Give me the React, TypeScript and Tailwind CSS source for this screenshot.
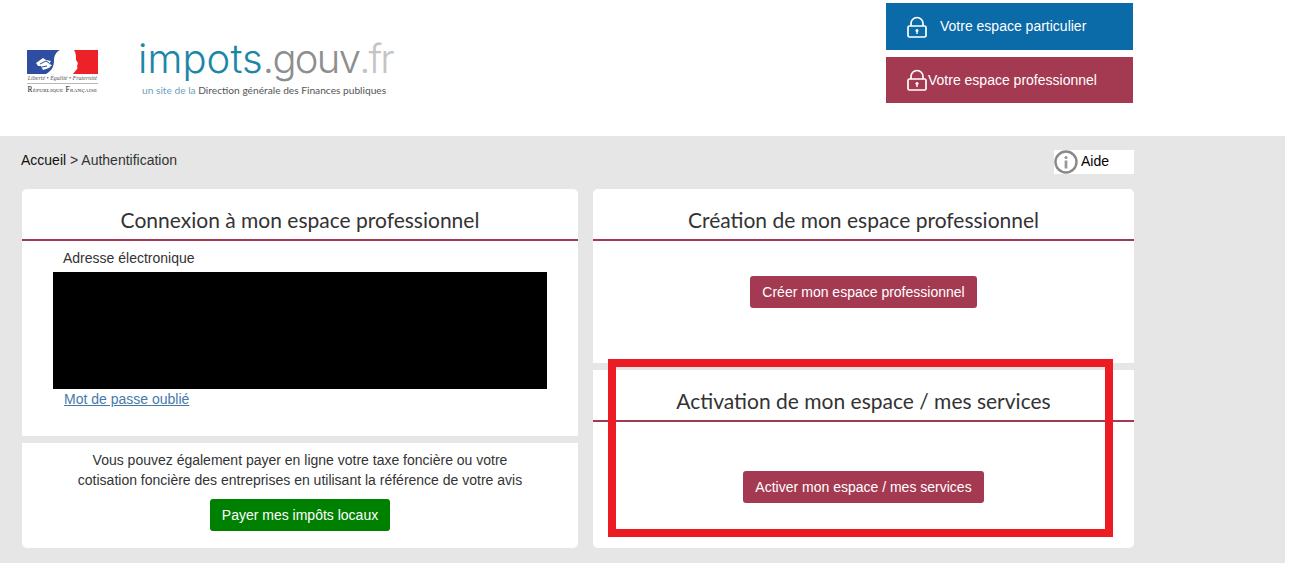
const sans = "font-['Liberation_Sans',Arial,sans-serif]";

function Marianne() {
  return (
    <svg width="71" height="24" viewBox="0 0 71 24" className="block">
      <rect x="0" y="0" width="71" height="24" fill="#fff" />
      <path d="M0 0h33c-4 2-6 6-6 10 0 5-1 10-8 14H0z" fill="#2f4ea1" />
      <path d="M47 0h24v24H46c1-2 3-3 4-5 1-1 0-2 0-3 1-1 0-2 1-3l-2-3c0-4 0-7-2-10z" fill="#ed2229" />
      <path d="M9 13l7-5 3 2 5 1-2 3 3 1-3 3-6 2-2-4-3 0z" fill="#fff" />
      <path d="M13 14l6-3 3 2M15 17l5-1" stroke="#2f4ea1" strokeWidth="1" fill="none" />
    </svg>
  );
}

function LockIcon() {
  return (
    <svg width="20" height="22" viewBox="0 0 20 22" fill="none" className="shrink-0">
      <path d="M4 10V7.5a6 6 0 0 1 12 0V10" stroke="#fff" strokeWidth="1.7" />
      <rect x="1" y="10" width="18" height="11" rx="1.5" stroke="#fff" strokeWidth="1.7" />
      <circle cx="10" cy="14.5" r="1.5" fill="#fff" />
      <rect x="9.3" y="15" width="1.4" height="3" fill="#fff" />
    </svg>
  );
}

function Heading({ children }: { children: React.ReactNode }) {
  return (
    <h2 className="border-b-2 border-[#a43a52] pb-[7px] text-center font-['Lato',sans-serif] text-[21px] leading-6 text-[#333]">
      {children}
    </h2>
  );
}

function Button({ children }: { children: React.ReactNode }) {
  return (
    <button className="rounded-[3px] bg-[#a43a52] px-3 py-[7px] text-[14px] leading-[18px] text-white">
      {children}
    </button>
  );
}

export default function App() {
  return (
    <div className={`h-[563px] w-[1293px] overflow-hidden bg-white ${sans}`}>
      {/* Header */}
      <header className="flex h-[136px] w-[1134px]">
        <div className="ml-[27px] mt-[50px] w-[71px]">
          <Marianne />
          <div className="mt-[1px] whitespace-nowrap border-b border-[#bbb] pb-[1px] text-center font-['Liberation_Serif',serif] text-[6px] italic leading-[7px] text-[#555]">
            Liberté • Égalité • Fraternité
          </div>
          <div className="mt-px whitespace-nowrap text-center font-['Liberation_Serif',serif] text-[7.5px] leading-[9px] tracking-[0.3px] text-[#222] [font-variant:small-caps]">
            République Française
          </div>
        </div>
        <div className="ml-[40px] mt-[37px] w-[260px]">
          <div className="whitespace-nowrap font-['Inter',sans-serif] text-[40px] font-light leading-[44px]">
            <span className="tracking-[0.1px] text-[#1a86a8]">impots</span>
            <span className="tracking-[-1.7px] text-[#8e8e8e]">.gouv</span>
            <span className="tracking-[-2px] text-[#c4c4c4]">.fr</span>
          </div>
          <div className="ml-[4px] mt-[3px] whitespace-nowrap font-['Lato',sans-serif] text-[10.2px] leading-3 text-[#555]">
            <span className="text-[#6f9fc0]">un site de la </span>Direction générale des Finances publiques
          </div>
        </div>
        <div className="ml-auto mr-px mt-[3px] flex w-[247px] flex-col gap-[7px]">
          <a className="flex h-[47px] items-center bg-[#0b6aa8] pl-[21px] text-[14px] text-white">
            <LockIcon />
            <span className="ml-[13px]">Votre espace particulier</span>
          </a>
          <a className="flex h-[46px] items-center bg-[#a43a52] pl-[21px] text-[14px] text-white">
            <LockIcon />
            <span className="ml-[1px]">Votre espace professionnel</span>
          </a>
        </div>
      </header>

      {/* Main */}
      <main className="h-[427px] w-[1285px] bg-[#e6e6e6] pl-[22px]">
        <div className="flex w-[1112px] items-start justify-between pt-[14px]">
          <div className="ml-[-1px] text-[14px] leading-5 text-[#333]">
            <a className="text-[#111]">Accueil</a> &gt; Authentification
          </div>
          <div className="flex h-6 w-[80px] items-center bg-white text-[14px] text-black">
            <svg width="24" height="24" viewBox="0 0 24 24" className="shrink-0">
              <circle cx="12" cy="12" r="10.5" fill="#fff" stroke="#888" strokeWidth="2.4" />
              <circle cx="12" cy="7.5" r="1.6" fill="#999" />
              <rect x="10.6" y="10.5" width="2.8" height="8" fill="#999" />
            </svg>
            <span className="ml-[3px] pb-[2px]">Aide</span>
          </div>
        </div>

        <div className="mt-[15px] flex w-[1112px] gap-[15px]">
          {/* Left column */}
          <div className="flex w-[556px] flex-col gap-[7px]">
            <section className="h-[247px] rounded-t-[5px] bg-white pt-[19px]">
              <Heading>Connexion à mon espace professionnel</Heading>
              <div className="pl-[31px]">
                <div className="pl-[10px] pt-[7px] text-[14px] leading-5 text-[#333]">Adresse électronique</div>
                <div className="mt-[4px] h-[117px] w-[494px] bg-black" />
                <a className="block pl-[11px] text-[14px] leading-5 text-[#4679aa] underline">Mot de passe oublié</a>
              </div>
            </section>
            <section className="flex h-[105px] flex-col items-center rounded-b-[5px] bg-white pt-[7px]">
              <p className="text-center text-[14px] leading-5 text-[#333]">
                Vous pouvez également payer en ligne votre taxe foncière ou votre
                <br />
                cotisation foncière des entreprises en utilisant la référence de votre avis
              </p>
              <button className="mt-[9px] rounded-[3px] bg-[#008000] px-3 py-[7px] text-[14px] leading-[18px] text-white">
                Payer mes impôts locaux
              </button>
            </section>
          </div>

          {/* Right column */}
          <div className="relative flex w-[541px] flex-col gap-[7px]">
            <section className="h-[174px] rounded-t-[5px] bg-white pt-[19px]">
              <Heading>Création de mon espace professionnel</Heading>
              <div className="flex justify-center pt-[35px]">
                <Button>Créer mon espace professionnel</Button>
              </div>
            </section>
            <section className="h-[178px] rounded-b-[5px] bg-white pt-[19px]">
              <Heading>Activation de mon espace / mes services</Heading>
              <div className="flex justify-center pt-[49px]">
                <Button>Activer mon espace / mes services</Button>
              </div>
            </section>
            {/* Red highlight drawn over the screenshot */}
            <div className="absolute left-[15px] top-[170px] h-[178px] w-[505px] border-[8px] border-[#ed1c24]" />
          </div>
        </div>
      </main>
    </div>
  );
}
